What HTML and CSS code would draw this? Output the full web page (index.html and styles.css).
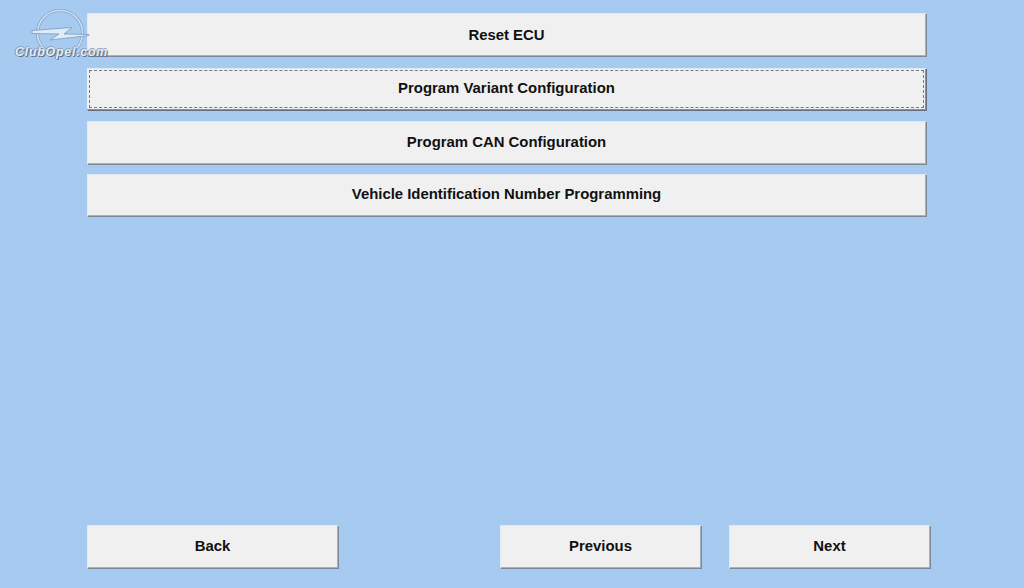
FILE: index.html
```html
<!DOCTYPE html>
<html lang="en">
<head>
  <meta charset="UTF-8" />
  <title>ECU Programming</title>
  <link rel="stylesheet" href="styles.css">
</head>
<body>
  <div class="screen">
    <div class="menu">
      <button class="btn menu-btn first">Reset ECU</button>
      <button class="btn menu-btn focused"><span class="focus-ring">Program Variant Configuration</span></button>
      <button class="btn menu-btn">Program CAN Configuration</button>
      <button class="btn menu-btn short">Vehicle Identification Number Programming</button>
    </div>

    <div class="nav">
      <button class="btn nav-back">Back</button>
      <button class="btn nav-prev">Previous</button>
      <button class="btn nav-next">Next</button>
    </div>

    <!-- Watermark -->
    <div class="watermark">
      <svg class="watermark-logo" width="62" height="46" viewBox="0 0 62 46">
        <circle cx="30" cy="24" r="22.5" fill="none" stroke="#86a6c8" stroke-width="3"/>
        <circle cx="30" cy="24" r="22.5" fill="none" stroke="#c9dff2" stroke-width="1.6"/>
        <path d="M2 21.5 L42 18.5 L34 25 L59 25.5 L59 26.5 L20 31 L29 25 L2 24.5 Z" fill="#dfebf6" stroke="#7d9ab8" stroke-width="0.8"/>
      </svg>
      <span class="watermark-text">ClubOpel.com</span>
    </div>
  </div>
</body>
</html>
```

FILE: styles.css
```css
* {
  margin: 0;
  padding: 0;
  box-sizing: border-box;
}

body, html {
  height: 100%;
  overflow: hidden;
}

.screen {
  position: relative;
  display: flex;
  flex-direction: column;
  height: 100vh;
  padding: 13px 0 20px 87px;
  background-color: #a6caf0;
  font-family: "Liberation Sans", Arial, sans-serif;
}

.btn {
  border: none;
  background-color: #f0f0f0;
  color: #111;
  font-family: inherit;
  font-size: 14.9px;
  font-weight: bold;
  box-shadow: inset 0 1px 0 #dde8f2, inset 1px 0 0 #e4ecf3, inset -1px -1px 0 #a9b1bd, 1px 1px 0 #7d8896;
  cursor: pointer;
}

.menu {
  display: flex;
  flex-direction: column;
  gap: 11px;
  width: 839px;
}

.menu-btn {
  height: 43px;
  padding-bottom: 1px;
}

.first {
  padding-bottom: 0;
}

.short {
  height: 42px;
  margin-top: -1px;
  padding-bottom: 2px;
}

.focused {
  display: flex;
  height: 42px;
  margin-top: 1px;
  padding: 2px;
  box-shadow: inset 0 1px 0 #dde8f2, inset -1px -1px 0 #8590a0, 1px 1px 0 #667082;
}

.focus-ring {
  display: flex;
  flex: 1;
  align-items: center;
  justify-content: center;
  padding-bottom: 2px;
  border: 1px dashed #77797c;
}

.nav {
  display: flex;
  margin-top: auto;
}

.nav .btn {
  height: 43px;
  padding-bottom: 2px;
}

.nav-back {
  width: 251px;
}

.nav-prev {
  width: 201px;
  margin-left: 162px;
}

.nav-next {
  width: 201px;
  margin-left: 28px;
}

.watermark {
  position: absolute;
  top: 9px;
  left: 15px;
  width: 94px;
  height: 50px;
}

.watermark-logo {
  position: absolute;
  top: 0;
  left: 15px;
}

.watermark-text {
  position: absolute;
  top: 36px;
  left: 0;
  font-size: 12.5px;
  font-weight: bold;
  font-style: italic;
  letter-spacing: 0.7px;
  white-space: nowrap;
  color: #e4edf6;
  text-shadow: 1px 1px 0 #5d6f85, -1px 0 0 #7f95ad, 0 -1px 0 #8ea4bc;
}
```
